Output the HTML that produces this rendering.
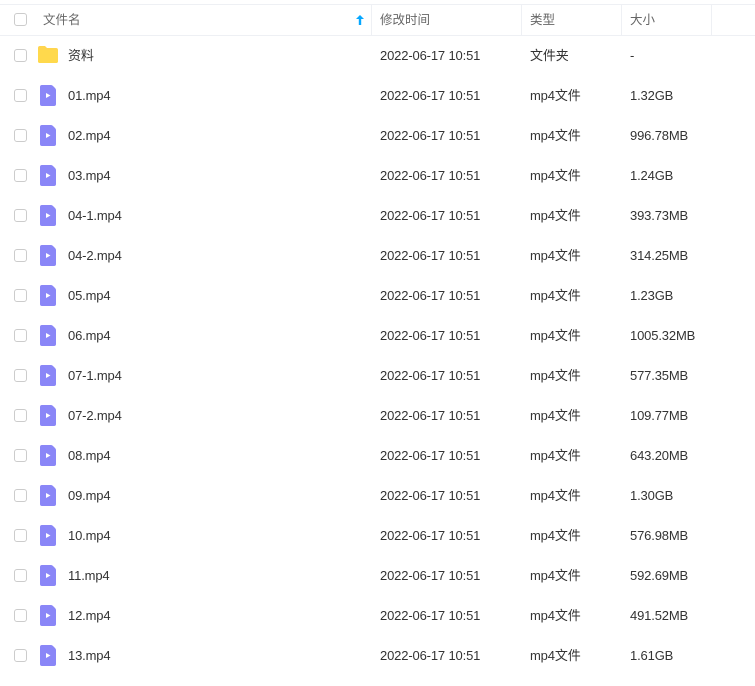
<!DOCTYPE html>
<html><head><meta charset="utf-8"><style>
body{margin:0;width:755px;height:686px;background:#fff;font-family:"Liberation Sans","Noto Sans CJK SC",sans-serif;font-size:13px;color:#333;overflow:hidden;position:relative}
.hdr{position:absolute;left:0;top:4px;width:755px;height:30px;border-top:1px solid #eef0f4;border-bottom:1px solid #eef0f4;color:#666;font-size:12.5px}
.hdr span{position:absolute;top:0;height:30px;line-height:30px}
.div{position:absolute;top:0;width:1px;height:30px;background:#eef0f4}
.cb{position:absolute;left:14px;width:11px;height:11px;border:1px solid #ccc;border-radius:3px;background:#fff}
.row{position:absolute;left:0;width:755px;height:40px}
.row span{position:absolute;top:1px;height:40px;line-height:40px;letter-spacing:-0.15px}
</style></head><body>
<div class="hdr">
<div class="cb" style="top:8px"></div>
<span style="left:43px">文件名</span>
<svg style="position:absolute;left:355px;top:9px" width="10" height="12" viewBox="0 0 10 12"><path d="M5 1 L9 5 H6.2 V11 H3.8 V5 H1 Z" fill="#06a7ff"/></svg>
<div class="div" style="left:371px"></div>
<span style="left:380px">修改时间</span>
<div class="div" style="left:521px"></div>
<span style="left:530px">类型</span>
<div class="div" style="left:621px"></div>
<span style="left:630px">大小</span>
<div class="div" style="left:711px"></div>
</div>
<div id="rows"></div>
<script>
var d=[["资料","文件夹","-"],["01.mp4","mp4文件","1.32GB"],["02.mp4","mp4文件","996.78MB"],["03.mp4","mp4文件","1.24GB"],["04-1.mp4","mp4文件","393.73MB"],["04-2.mp4","mp4文件","314.25MB"],["05.mp4","mp4文件","1.23GB"],["06.mp4","mp4文件","1005.32MB"],["07-1.mp4","mp4文件","577.35MB"],["07-2.mp4","mp4文件","109.77MB"],["08.mp4","mp4文件","643.20MB"],["09.mp4","mp4文件","1.30GB"],["10.mp4","mp4文件","576.98MB"],["11.mp4","mp4文件","592.69MB"],["12.mp4","mp4文件","491.52MB"],["13.mp4","mp4文件","1.61GB"]];
var h="";
d.forEach(function(r,i){
var t=35+i*40;
var icon=i==0?'<svg style="position:absolute;left:38px;top:11px" width="20" height="17" viewBox="0 0 20 17"><path d="M0 2 Q0 0 2 0 H7 L9 2 H18 Q20 2 20 4 V15 Q20 17 18 17 H2 Q0 17 0 15 Z" fill="#ffd54f"/><path d="M0 4 H20 V15 Q20 17 18 17 H2 Q0 17 0 15Z" fill="#ffd94c"/></svg>'
:'<svg style="position:absolute;left:40px;top:10px" width="16" height="21" viewBox="0 0 16 21"><path d="M2 0 H11 Q12 0 13 1 L15 3 Q16 4 16 5 V19 Q16 21 14 21 H2 Q0 21 0 19 V2 Q0 0 2 0Z" fill="#8a86f7"/><path d="M6 8 L10.5 10.5 L6 13Z" fill="#fff"/></svg>';
h+='<div class="row" style="top:'+t+'px"><div class="cb" style="top:14px"></div>'+icon+'<span style="left:68px">'+r[0]+'</span><span style="left:380px">2022-06-17 10:51</span><span style="left:530px">'+r[1]+'</span><span style="left:630px">'+r[2]+'</span></div>';
});
document.getElementById("rows").innerHTML=h;
</script>
</body></html>
